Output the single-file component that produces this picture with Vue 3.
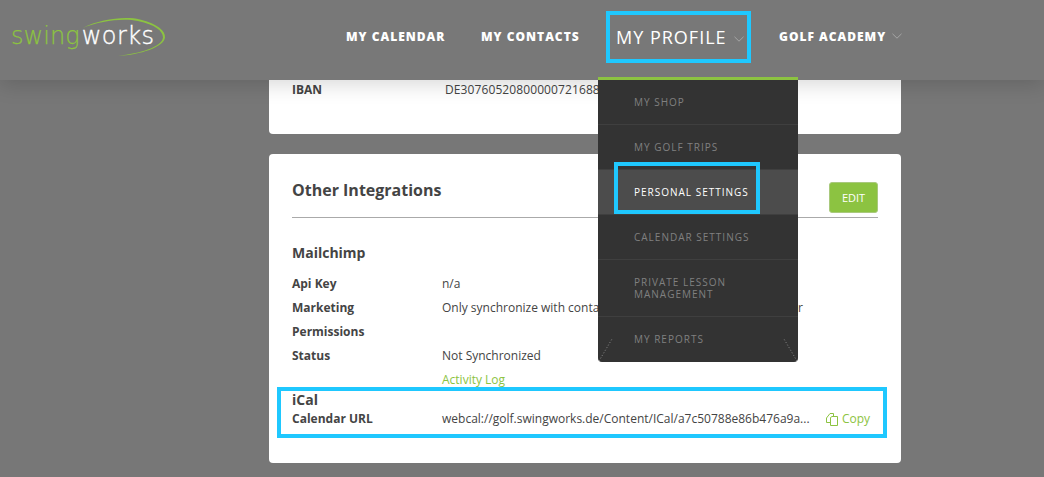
<script setup>
const menu = [
  { label: 'MY SHOP' },
  { label: 'MY GOLF TRIPS' },
  { label: 'PERSONAL SETTINGS', active: true },
  { label: 'CALENDAR SETTINGS' },
  { label: 'PRIVATE LESSON MANAGEMENT', tall: true },
  { label: 'MY REPORTS' }
]
const rows = [
  ['Api Key', 'n/a'],
  ['Marketing', 'Only synchronize with contacts who have opted in for newsletter'],
  ['Permissions', ''],
  ['Status', 'Not Synchronized']
]
</script>

<template>
  <div class="page">
    <header class="topbar">
      <div class="logo">
        <svg class="swoosh" width="180" height="70" viewBox="0 0 180 70" aria-hidden="true">
          <path fill="#8cc341" d="M83 28C100 19 125 16 140 19.500C158 24 165.500 31 165 37.500C164 47 140 55 118 55.800C140 53.500 162 47 163 37.500C163 31 155 24.500 138 21C122 18 100 21 83 28Z" />
        </svg>
        <span class="swing">swing</span><span class="works">works</span>
      </div>
      <nav class="nav">
        <a class="nav-link calendar">MY CALENDAR</a>
        <a class="nav-link contacts">MY CONTACTS</a>
        <div class="profile">
          <span class="profile-text">MY PROFILE</span>
          <svg class="chev" width="10" height="6" viewBox="0 0 10 6"><path d="M.5.800 5 5.200 9.500.800" fill="none" stroke="#a5a5a5" stroke-width="1" /></svg>
          <div class="dropdown">
            <div
              v-for="item in menu"
              :key="item.label"
              class="menu-item"
              :class="{ active: item.active, tall: item.tall }"
            >
              <span class="menu-label">{{ item.label }}</span>
              <span v-if="item.active" class="menu-mark"></span>
            </div>
            <svg class="corner left" width="16" height="24" viewBox="0 0 16 24"><path d="M1 23 14 1" stroke="#8a8a8a" stroke-width="1" stroke-dasharray="1 2" fill="none" /></svg>
            <svg class="corner right" width="16" height="24" viewBox="0 0 16 24"><path d="M15 23 2 1" stroke="#8a8a8a" stroke-width="1" stroke-dasharray="1 2" fill="none" /></svg>
          </div>
        </div>
        <a class="nav-link academy">GOLF ACADEMY</a>
        <svg class="chev academy-chev" width="10" height="6" viewBox="0 0 10 6"><path d="M.5.800 5 5.200 9.500.800" fill="none" stroke="#a5a5a5" stroke-width="1" /></svg>
      </nav>
    </header>

    <main class="main">
      <section class="card bank">
        <div class="iban"><span class="iban-label">IBAN</span><span class="iban-value">DE30760520800000721688</span></div>
      </section>

      <section class="card integrations">
        <div class="card-head">
          <h2 class="card-title">Other Integrations</h2>
          <button class="edit" type="button">EDIT</button>
        </div>
        <h3 class="sub first">Mailchimp</h3>
        <div v-for="row in rows" :key="row[0]" class="row">
          <span class="key">{{ row[0] }}</span><span class="val">{{ row[1] }}</span>
        </div>
        <div class="row activity">
          <span class="key"></span><a class="val link">Activity Log</a>
        </div>
        <div class="ical">
          <h3 class="sub ical-title">iCal</h3>
          <div class="row url-row">
            <span class="key">Calendar URL</span>
            <span class="val url">webcal://golf.swingworks.de/Content/ICal/a7c50788e86b476a9a...</span>
            <a class="copy">
              <svg width="12" height="13" viewBox="0 0 12 13" aria-hidden="true">
                <path d="M4.500 4.500L6 3.500H11.500V12.500H4.500ZM4.500 9.500H.5V5L4 .5H7.500V3.500" fill="none" stroke="#8cc341" stroke-width="1" />
              </svg>
              Copy
            </a>
          </div>
        </div>
      </section>
    </main>
  </div>
</template>

<style scoped>
.page {
  width: 1044px;
  height: 477px;
  overflow: hidden;
  background: #777;
  font-family: "Open Sans", "Liberation Sans", sans-serif;
  color: #444;
}
.topbar {
  position: relative;
  z-index: 2;
  height: 80px;
  display: flex;
  background: #787878;
  box-shadow: 0 4px 20px rgba(0, 0, 0, .16);
}
.logo {
  position: relative;
  width: 346px;
  flex: none;
  padding: 21px 0 0 11px;
  box-sizing: border-box;
  font-family: "DejaVu Sans", sans-serif;
  font-size: 24px;
  line-height: 30px;
  white-space: nowrap;
}
.swoosh { position: absolute; left: 0; top: 0; }
.swing { color: #8cc341; font-weight: 200; letter-spacing: .05px; -webkit-text-stroke: .25px #8cc341; }
.works { color: #fff; font-weight: 200; margin-left: 2px; letter-spacing: .45px; -webkit-text-stroke: .35px #fff; }
.nav { display: flex; align-items: flex-start; }
.nav-link {
  font-size: 12px;
  line-height: 16px;
  font-weight: 800;
  letter-spacing: 1px;
  color: #fff;
  margin-top: 29px;
  white-space: nowrap;
}
.calendar { width: 99px; margin-right: 36px; }
.contacts { width: 99px; margin-right: 26px; }
.academy { width: 108px; margin-left: 28px; }
.academy-chev { margin: 33px 0 0 5px; }
.profile {
  position: relative;
  width: 145px;
  height: 52px;
  margin-top: 11px;
  box-sizing: border-box;
  border: 4px solid #1fc8ff;
  display: flex;
  align-items: center;
  padding-left: 6px;
}
.profile-text {
  width: 111px;
  flex: none;
  font-size: 18px;
  letter-spacing: 1px;
  line-height: 24px;
  color: #fff;
  white-space: nowrap;
}
.chev { flex: none; }
.profile .chev { margin: 3px 0 0 7px; }
.dropdown {
  position: absolute;
  left: -12px;
  top: 62px;
  width: 200px;
  border-top: 3px solid #8cc341;
  border-radius: 0 0 4px 4px;
  background: #333;
  overflow: hidden;
}
.menu-item {
  position: relative;
  height: 45px;
  box-sizing: border-box;
  border-bottom: 1px solid #3f3f3f;
  padding: 0 36px;
  display: flex;
  align-items: center;
  font-size: 10px;
  line-height: 12px;
  letter-spacing: 1px;
  color: #808080;
}
.menu-item:last-of-type { border-bottom: 0; padding-bottom: 2px; }
.menu-item.tall { height: 57px; }
.menu-item.active { background: #4c4c4c; color: #fff; }
.menu-mark {
  position: absolute;
  left: 16px;
  top: -8px;
  width: 146px;
  height: 52px;
  box-sizing: border-box;
  border: 4px solid #1fc8ff;
}
.corner { position: absolute; bottom: 0; }
.corner.left { left: 0; }
.corner.right { right: 0; }
.main {
  padding-left: 269px;
  width: 632px;
  display: flex;
  flex-direction: column;
  gap: 20px;
}
.card {
  width: 632px;
  box-sizing: border-box;
  background: #fff;
  border-radius: 4px;
}
.bank { height: 54px; padding: 1px 0 0 23px; border-radius: 0 0 4px 4px; }
.iban {
  display: flex;
  font-size: 12px;
  line-height: 18px;
}
.iban-label { width: 153px; font-weight: 700; }
.iban-value { white-space: nowrap; letter-spacing: .1px; }
.integrations { padding: 0 23px 25px; }
.card-head {
  height: 64px;
  box-sizing: border-box;
  border-bottom: 1px solid #aaa;
  display: flex;
  justify-content: space-between;
  align-items: flex-end;
}
.card-title {
  margin: 0;
  align-self: flex-start;
  padding-top: 24px;
  font-size: 16px;
  line-height: 24px;
  font-weight: 700;
}
.edit {
  width: 49px;
  height: 31px;
  margin-bottom: 4px;
  padding: 0;
  border: 1px solid #a9c97d;
  border-radius: 3px;
  background: #8cc341;
  color: #fff;
  font: 400 11px "Open Sans", sans-serif;
}
.sub {
  margin: 0;
  font-size: 14px;
  font-weight: 700;
}
.first { margin-top: 24px; margin-bottom: 8px; line-height: 22px; }
.row {
  display: flex;
  height: 24px;
  font-size: 12px;
  line-height: 24px;
  white-space: nowrap;
}
.key { width: 150px; flex: none; font-weight: 700; }
.val { flex: none; }
.activity { height: 19px; }
.link { color: #8cc341; }
.ical {
  margin: 0 -9px 0 -15px;
  padding: 1px 5px 4px 11px;
  border: 4px solid #1fc8ff;
}
.ical-title { line-height: 16px; }
.url-row { height: 22px; line-height: 22px; }
.url { width: 384px; }
.copy {
  display: flex;
  align-items: center;
  gap: 4px;
  color: #8cc341;
  margin-left: auto;
  margin-right: 8px;
}
</style>

<style>
html, body { margin: 0; overflow: hidden; }
</style>
